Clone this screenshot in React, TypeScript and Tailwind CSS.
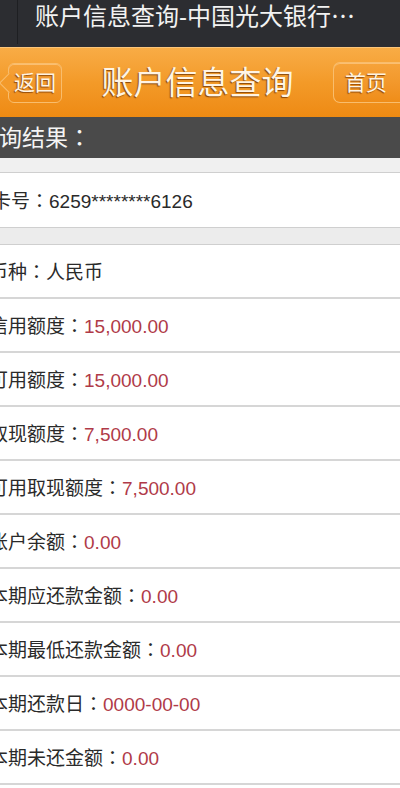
import React from "react";

const rows: { label: string; value: string; red: boolean }[] = [
  { label: "币种", value: "人民币", red: false },
  { label: "信用额度", value: "15,000.00", red: true },
  { label: "可用额度", value: "15,000.00", red: true },
  { label: "取现额度", value: "7,500.00", red: true },
  { label: "可用取现额度", value: "7,500.00", red: true },
  { label: "账户余额", value: "0.00", red: true },
  { label: "本期应还款金额", value: "0.00", red: true },
  { label: "本期最低还款金额", value: "0.00", red: true },
  { label: "本期还款日", value: "0000-00-00", red: true },
  { label: "本期未还金额", value: "0.00", red: true },
];

function Colon() {
  return <span className="font-['Noto_Sans_CJK_JP',sans-serif]">：</span>;
}

export default function App() {
  return (
    <div className="w-[400px] h-[788px] overflow-hidden bg-white font-['Liberation_Sans','Noto_Sans_CJK_SC',sans-serif]">
      {/* title bar */}
      <div className="relative h-[47px] bg-[#2c2d31] overflow-hidden">
        <div className="absolute left-[17px] top-0 h-[44px] w-px bg-[#1e1f22]" />
        <div className="pl-[35px] text-[24px] leading-[30px] text-[#f2f2f2] whitespace-nowrap">
          账户信息查询-中国光大银行<span className="font-['Noto_Sans_CJK_JP',sans-serif]">⋯</span>
        </div>
      </div>
      {/* orange nav */}
      <div className="relative h-[70px] flex items-center bg-gradient-to-b from-[#f8ac45] via-[#f39a28] to-[#ee8a12] border-t border-[#fbc57a] overflow-hidden">
        <div className="relative ml-[8px] h-[40px] w-[54px] rounded-[6px] border border-[#f9bd6c] bg-gradient-to-b from-[#f6a33a] to-[#ef8d18] flex items-center justify-center shadow-[inset_0_1px_0_rgba(255,220,170,0.5)]">
          <div className="absolute left-[-7px] top-[12px] h-[14px] w-[14px] rotate-45 border-l border-b border-[#f9bd6c] bg-[#f39a2a]" />
          <span className="relative text-[21px] leading-none text-[#fff3e2] [text-shadow:-1px_1px_1px_rgba(110,50,0,0.75)]">返回</span>
        </div>
        <div className="flex-1 text-center text-[32px] leading-none text-[#fff4e4] [text-shadow:-1px_1px_1px_rgba(110,50,0,0.8)]">
          账户信息查询
        </div>
        <div className="h-[41px] w-[67px] rounded-l-[7px] border border-r-0 border-[#f9bd6c] bg-gradient-to-b from-[#f6a33a] to-[#ef8d18] flex items-center pl-[11px] shadow-[inset_0_1px_0_rgba(255,220,170,0.5)]">
          <span className="text-[21px] leading-none text-[#fff3e2] [text-shadow:-1px_1px_1px_rgba(110,50,0,0.75)] whitespace-nowrap">首页</span>
        </div>
      </div>
      {/* section header */}
      <div className="h-[41px] bg-[#4a4a4a] flex items-center overflow-hidden">
        <span className="ml-[-24px] text-[23px] leading-none text-[#f4f4f4] whitespace-nowrap">
          查询结果<Colon />
        </span>
      </div>
      <div className="h-[15px] bg-[#f0f0f0] border-b border-[#cfcfcf]" />
      {/* card row */}
      <div className="h-[54px] flex items-center overflow-hidden">
        <span className="ml-[-8px] text-[19px] leading-none text-[#2a2a2a] whitespace-nowrap">
          卡号<Colon />6259********6126
        </span>
      </div>
      <div className="h-[18px] bg-[#ececec] border-y border-[#cfcfcf]" />
      {rows.map((r) => (
        <div key={r.label} className="h-[54px] flex items-center border-b-2 border-[#d6d6d6] overflow-hidden">
          <span className="ml-[-11px] text-[19px] leading-none whitespace-nowrap">
            <span className="text-[#2a2a2a]">
              {r.label}
              <Colon />
            </span>
            <span className={r.red ? "text-[#b03a48]" : "text-[#2a2a2a]"}>{r.value}</span>
          </span>
        </div>
      ))}
    </div>
  );
}
